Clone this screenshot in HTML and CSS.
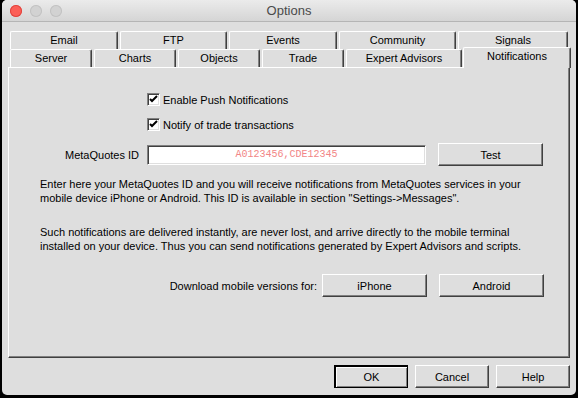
FILE: index.html
```html
<!DOCTYPE html>
<html lang="en">
<head>
    <meta charset="UTF-8">
    <title>Options</title>
    <link rel="stylesheet" href="styles.css">
</head>
<body>
    <div class="window">
        <div class="titlebar">
            <div class="lights">
                <span class="light close"></span>
                <span class="light"></span>
                <span class="light"></span>
            </div>
            <div class="title">Options</div>
            <div></div>
        </div>
        <div class="tabstrip">
            <div class="tab-row">
                <div class="tab" style="width:108px">Email</div>
                <div class="tab" style="width:107px">FTP</div>
                <div class="tab" style="width:108px">Events</div>
                <div class="tab" style="width:117px">Community</div>
                <div class="tab" style="width:110px">Signals</div>
            </div>
            <div class="tab-row">
                <div class="tab" style="width:82px">Server</div>
                <div class="tab" style="width:82px">Charts</div>
                <div class="tab" style="width:82px">Objects</div>
                <div class="tab" style="width:82px">Trade</div>
                <div class="tab" style="width:116px">Expert Advisors</div>
                <div class="tab active" style="width:108px">Notifications</div>
            </div>
        </div>
        <div class="panel">
            <label class="check">
                <span class="box"><svg width="9" height="9" viewBox="0 0 9 9"><path d="M1 4 L3 6 L8 1" fill="none" stroke="#000" stroke-width="2"/></svg></span>
                Enable Push Notifications
            </label>
            <label class="check">
                <span class="box"><svg width="9" height="9" viewBox="0 0 9 9"><path d="M1 4 L3 6 L8 1" fill="none" stroke="#000" stroke-width="2"/></svg></span>
                Notify of trade transactions
            </label>
            <div class="id-row">
                <span class="id-label">MetaQuotes ID</span>
                <div class="field">A0123456,CDE12345</div>
                <button class="btn wide">Test</button>
            </div>
            <p class="info">Enter here your MetaQuotes ID and you will receive notifications from MetaQuotes services in your<br>mobile device iPhone or Android. This ID is available in section "Settings-&gt;Messages".</p>
            <p class="info">Such notifications are delivered instantly, are never lost, and arrive directly to the mobile terminal<br>installed on your device. Thus you can send notifications generated by Expert Advisors and scripts.</p>
            <div class="download">
                <span>Download mobile versions for:</span>
                <button class="btn wide">iPhone</button>
                <button class="btn wide">Android</button>
            </div>
        </div>
        <div class="footer">
            <button class="btn default">OK</button>
            <button class="btn">Cancel</button>
            <button class="btn">Help</button>
        </div>
    </div>
</body>
</html>
```
FILE: styles.css
```css
body {
    margin: 0;
    background: #000;
    font-family: "Liberation Sans", Arial, sans-serif;
    font-size: 11px;
    color: #000;
}
.window {
    width: 574px;
    height: 395px;
    margin-left: 2px;
    background: #dedede;
    border-radius: 5px;
    overflow: hidden;
}
.titlebar {
    height: 22px;
    display: grid;
    grid-template-columns: 1fr auto 1fr;
    align-items: center;
    background: linear-gradient(#ebebeb, #d5d5d5);
    border-bottom: 1px solid #b5b5b5;
    box-sizing: border-box;
}
.lights {
    display: flex;
    gap: 8px;
    padding-left: 8px;
}
.light {
    width: 12px;
    height: 12px;
    border-radius: 50%;
    background: #d2d2d2;
    box-shadow: inset 0 0 0 1px #c2c2c2;
}
.light.close {
    background: #fc5f57;
    box-shadow: inset 0 0 0 1px #e0443e;
}
.title {
    font-size: 13px;
    color: #4a4a4a;
}
.tabstrip {
    padding: 9px 0 0 8px;
}
.tab-row {
    display: flex;
    gap: 2px;
    height: 18px;
    align-items: flex-end;
}
.tab {
    height: 18px;
    box-sizing: border-box;
    line-height: 17px;
    text-align: center;
    background: #dedede;
    border-top: 1px solid #fff;
    border-left: 1px solid #fff;
    border-right: 1px solid #404040;
    border-radius: 2px 2px 0 0;
    box-shadow: inset -1px 0 #808080;
}
.tab.active {
    height: 21px;
    margin-bottom: -1px;
    margin-left: -1px;
    position: relative;
    z-index: 1;
    line-height: 17px;
}
.panel {
    margin-left: 6px;
    width: 562px;
    height: 291px;
    box-sizing: border-box;
    border-top: 1px solid #fff;
    border-left: 1px solid #fff;
    border-right: 1px solid #404040;
    border-bottom: 1px solid #404040;
    box-shadow: inset -1px -1px #808080;
    padding-top: 25px;
}
.check {
    display: flex;
    align-items: center;
    gap: 3px;
    height: 13px;
    margin: 0 0 12px 138px;
}
.box {
    width: 13px;
    height: 13px;
    box-sizing: border-box;
    background: #fff;
    border-top: 1px solid #808080;
    border-left: 1px solid #808080;
    border-right: 1px solid #fff;
    border-bottom: 1px solid #fff;
    box-shadow: inset 1px 1px #404040, inset -1px -1px #dfdfdf;
    display: flex;
    align-items: center;
    justify-content: center;
}
.id-row {
    display: flex;
    align-items: center;
    margin-top: 10px;
}
.id-label {
    width: 130px;
    text-align: right;
    margin-right: 8px;
}
.field {
    width: 279px;
    height: 20px;
    box-sizing: border-box;
    background: #fff;
    border-top: 1px solid #808080;
    border-left: 1px solid #808080;
    border-right: 1px solid #fff;
    border-bottom: 1px solid #fff;
    box-shadow: inset 1px 1px #404040, inset -1px -1px #dfdfdf;
    font-family: "Liberation Mono", monospace;
    font-size: 10px;
    color: #f28585;
    text-align: center;
    line-height: 18px;
}
.btn {
    font: inherit;
    color: #000;
    width: 74px;
    height: 23px;
    padding: 0;
    background: #dedede;
    border-top: 1px solid #fff;
    border-left: 1px solid #fff;
    border-right: 1px solid #404040;
    border-bottom: 1px solid #404040;
    box-shadow: inset -1px -1px #808080;
}
.btn.wide {
    width: 105px;
}
.id-row .btn {
    margin-left: 12px;
}
.btn.default {
    outline: 1px solid #000;
    outline-offset: -1px;
    border-top: 2px solid #000;
    border-left: 2px solid #000;
    box-shadow: inset 1px 1px #fff, inset -1px -1px #808080;
}
.info {
    margin: 11px 0 20px 31px;
    line-height: 14px;
    white-space: nowrap;
}
.info + .info {
    margin-top: 0;
}
.download {
    display: flex;
    align-items: center;
    justify-content: flex-end;
    padding-right: 25px;
    margin-top: 21px;
}
.download span {
    margin-right: 5px;
}
.download .btn + .btn {
    margin-left: 12px;
}
.footer {
    display: flex;
    justify-content: flex-end;
    gap: 7px;
    padding: 7px 6px 0 0;
}
```
